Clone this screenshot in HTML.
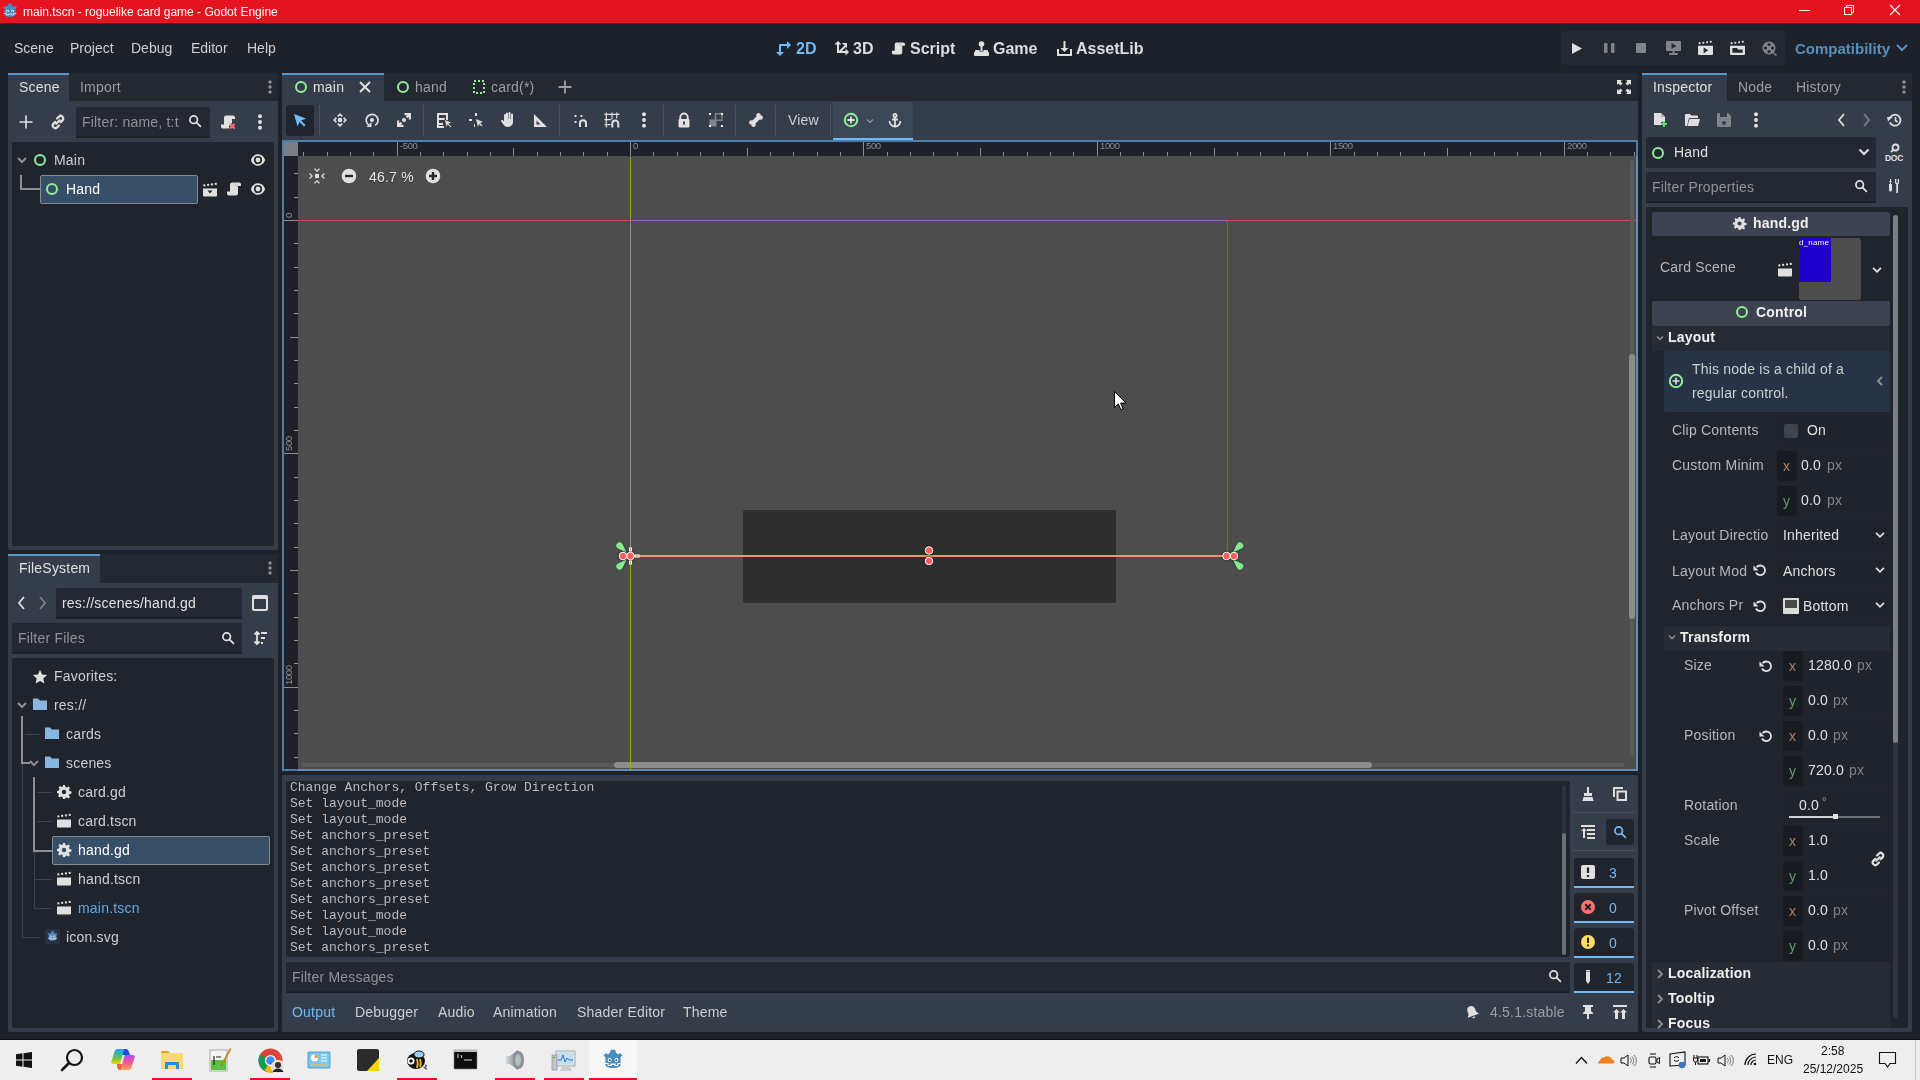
<!DOCTYPE html>
<html><head><meta charset="utf-8">
<style>
*{margin:0;padding:0;box-sizing:border-box}
html,body{width:1920px;height:1080px;overflow:hidden;background:#1d2129;font-family:"Liberation Sans",sans-serif;font-size:14px;color:#cdcfd2}
.a{position:absolute}
.t{position:absolute;white-space:nowrap;line-height:1;letter-spacing:.2px;will-change:transform}
svg{position:absolute;overflow:visible}
</style></head><body>

<svg width="0" height="0" style="position:absolute">
<defs>
<symbol id="i-plus" viewBox="0 0 16 16"><path d="M8 1.5v13M1.5 8h13" stroke="#e0e0e0" stroke-width="1.6" fill="none"/></symbol>
<symbol id="i-link" viewBox="0 0 16 16"><g fill="none" stroke="#e0e0e0" stroke-width="2.2" stroke-linecap="round"><path d="M7 4.5l1.8-1.8a2.6 2.6 0 0 1 3.7 3.7L10.7 8.2"/><path d="M9 11.5l-1.8 1.8a2.6 2.6 0 0 1-3.7-3.7L5.3 7.8"/><path d="M6.2 9.8l3.6-3.6"/></g></symbol>
<symbol id="i-search" viewBox="0 0 16 16"><g fill="none" stroke="#e0e0e0" stroke-width="2"><circle cx="6.5" cy="6.5" r="4.3"/><path d="M9.6 9.6l4.6 4.6" stroke-linecap="round"/></g></symbol>
<symbol id="i-kebab" viewBox="0 0 16 16"><g fill="#e0e0e0"><circle cx="8" cy="2.2" r="2"/><circle cx="8" cy="8" r="2"/><circle cx="8" cy="13.8" r="2"/></g></symbol>
<symbol id="i-kebabg" viewBox="0 0 16 16"><g fill="#8d9096"><circle cx="8" cy="3" r="1.7"/><circle cx="8" cy="8" r="1.7"/><circle cx="8" cy="13" r="1.7"/></g></symbol>
<symbol id="i-eye" viewBox="0 0 16 16"><path d="M8 2.3C4.3 2.3 1.5 5.3 1 8c.5 2.7 3.3 5.7 7 5.7s6.5-3 7-5.7c-.5-2.7-3.3-5.7-7-5.7zm0 1.6a4.1 4.1 0 1 1 0 8.2 4.1 4.1 0 0 1 0-8.2z" fill="#e0e0e0" fill-rule="evenodd"/><path d="M8 5.4a2.6 2.6 0 1 1 0 5.2 2.6 2.6 0 0 1 0-5.2z" fill="none" stroke="#20242c" stroke-width="0"/><circle cx="8" cy="8" r="2.4" fill="#e0e0e0"/></symbol>
<symbol id="i-node" viewBox="0 0 16 16"><circle cx="8" cy="8" r="5" fill="none" stroke="#8eef97" stroke-width="2"/></symbol>
<symbol id="i-clap" viewBox="0 0 16 16"><g fill="#e0e0e0"><path d="M1 6.5h14v7a1 1 0 0 1-1 1H2a1 1 0 0 1-1-1z"/><path d="M1.2 2.6l2 -.3.3 2-2 .3zM5 2.1l2-.3.3 2-2 .3zM8.8 1.6l2-.3.3 2-2 .3zM12.6 1.1l2-.3.3 2-2 .3z"/></g></symbol>
<symbol id="i-clapd" viewBox="0 0 16 16"><g fill="#e0e0e0"><path d="M1 6.5h14v7a1 1 0 0 1-1 1H2a1 1 0 0 1-1-1z"/><path d="M1.2 2.6l2 -.3.3 2-2 .3zM5 2.1l2-.3.3 2-2 .3zM8.8 1.6l2-.3.3 2-2 .3zM12.6 1.1l2-.3.3 2-2 .3z"/></g><path d="M5.5 8.5h5L8 11.5z" fill="#20242c"/></symbol>
<symbol id="i-script" viewBox="0 0 16 16"><path d="M6 1.5h7a2 2 0 0 1 2 2v1.5h-3V12a2.5 2.5 0 0 1-2.5 2.5H3A2 2 0 0 1 1 12.5V10.5h3V3.5a2 2 0 0 1 2-2z" fill="#e0e0e0"/><path d="M9.5 1.8v3.2H12" fill="none" stroke="#b8b8b8" stroke-width=".8"/></symbol>
<symbol id="i-scriptx" viewBox="0 0 16 16"><path d="M6 1.5h7a2 2 0 0 1 2 2v1.5h-3V9l-3 3v2.5H3A2 2 0 0 1 1 12.5V10.5h3V3.5a2 2 0 0 1 2-2z" fill="#e0e0e0"/><path d="M10 10l4.5 4.5M14.5 10L10 14.5" stroke="#ff6e6e" stroke-width="2"/></symbol>
<symbol id="i-chev" viewBox="0 0 16 16"><path d="M4 6l4 4 4-4" fill="none" stroke="#8d9096" stroke-width="2"/></symbol>
<symbol id="i-chevw" viewBox="0 0 16 16"><path d="M3.5 5.5l4.5 4.5 4.5-4.5" fill="none" stroke="#e0e0e0" stroke-width="2"/></symbol>
<symbol id="i-folder" viewBox="0 0 16 16"><path d="M1 2.5h5l2 2h7v9.5H1z" fill="#88b6dd"/></symbol>
<symbol id="i-gear" viewBox="0 0 16 16"><path fill="#e0e0e0" fill-rule="evenodd" d="M7 1h2l.4 2a5 5 0 0 1 1.5.6l1.7-1.1 1.4 1.4-1.1 1.7a5 5 0 0 1 .6 1.5l2 .4v2l-2 .4a5 5 0 0 1-.6 1.5l1.1 1.7-1.4 1.4-1.7-1.1a5 5 0 0 1-1.5.6L9 15H7l-.4-2a5 5 0 0 1-1.5-.6l-1.7 1.1-1.4-1.4 1.1-1.7A5 5 0 0 1 2.5 9.4L1 9V7l2-.4a5 5 0 0 1 .6-1.5L2.5 3.4l1.4-1.4 1.7 1.1A5 5 0 0 1 7 2.5zM8 5.8A2.2 2.2 0 1 0 8 10.2 2.2 2.2 0 0 0 8 5.8z"/></symbol>
<symbol id="i-star" viewBox="0 0 16 16"><path d="M8 1l2.1 4.6 5 .5-3.8 3.4 1.1 4.9L8 11.9l-4.4 2.5 1.1-4.9L.9 6.1l5-.5z" fill="#e0e0e0"/></symbol>
<symbol id="i-godot" viewBox="0 0 16 16"><rect x="0" y="0" width="16" height="16" rx="2" fill="#2a3142"/><g transform="translate(2 2) scale(.75)"><path d="M2.5 6L1 4.5 3 3l1.5 1L6 2.2 6.5.5h3L10 2.2 11.5 4 13 3l2 1.5L13.5 6v6c-2 2.5-9 2.5-11 0z" fill="#478cbf"/><circle cx="5.5" cy="8" r="1.5" fill="#fff"/><circle cx="10.5" cy="8" r="1.5" fill="#fff"/><circle cx="5.6" cy="8.1" r=".7" fill="#414042"/><circle cx="10.4" cy="8.1" r=".7" fill="#414042"/><path d="M1.5 10.5h3v1.5h2v-1h3v1h2v-1.5h3" fill="none" stroke="#fff" stroke-width=".9"/></g></symbol>
<symbol id="i-larr" viewBox="0 0 16 16"><path d="M10 2L5 8l5 6" fill="none" stroke="#e0e0e0" stroke-width="1.8"/></symbol>
<symbol id="i-rarr" viewBox="0 0 16 16"><path d="M6 2l5 6-5 6" fill="none" stroke="#7d8087" stroke-width="1.8"/></symbol>
</defs></svg>

<!-- TITLE BAR -->
<div class="a" style="left:0;top:0;width:1920px;height:23px;background:#e5131f"></div>
<div class="t" style="left:23px;top:6px;font-size:12px;color:#fff;letter-spacing:0">main.tscn - roguelike card game - Godot Engine</div>


<svg style="left:2px;top:3px" width="16" height="16" viewBox="0 0 16 16"><path d="M2.5 6L1 4.5 3 3l1.5 1L6 2.2 6.5.5h3L10 2.2 11.5 4 13 3l2 1.5L13.5 6v6c-2 2.5-9 2.5-11 0z" fill="#478cbf"/><circle cx="5.5" cy="8" r="1.3" fill="#fff"/><circle cx="10.5" cy="8" r="1.3" fill="#fff"/><circle cx="5.6" cy="8.1" r=".6" fill="#333"/><circle cx="10.4" cy="8.1" r=".6" fill="#333"/><path d="M1.5 10.5h3v1.5h2v-1h3v1h2v-1.5h3" fill="none" stroke="#fff" stroke-width=".7"/></svg>
<svg style="left:1799px;top:10px" width="11" height="1"><rect width="11" height="1" fill="#fff"/></svg>
<svg style="left:1843px;top:4px" width="12" height="12" viewBox="0 0 12 12"><g fill="none" stroke="#fff" stroke-width="1"><rect x="1.5" y="3.5" width="7" height="7"/><path d="M3.5 3.5v-2h7v7h-2"/></g></svg>
<svg style="left:1889px;top:4px" width="12" height="12" viewBox="0 0 12 12"><path d="M1 1l10 10M11 1L1 11" stroke="#fff" stroke-width="1.1"/></svg>

<!-- MAIN SCREENS -->
<svg style="left:776px;top:41px" width="16" height="15" viewBox="0 0 16 15"><g fill="#70bafa"><path d="M3 4h2v8H3z"/><path d="M3 3h8v2H3z"/><path d="M11 0l4 4-4 4z"/><path d="M0 11h8l-4 4z"/></g></svg>
<div class="t" style="left:796px;top:41px;font-size:16px;font-weight:bold;letter-spacing:0;color:#70bafa">2D</div>
<svg style="left:834px;top:41px" width="15" height="15" viewBox="0 0 15 15"><g fill="#e0e0e0"><path d="M3 2h2v10H3z"/><path d="M3 10h10v2H3z"/><path d="M4 0l3.5 3.5h-7z"/><path d="M15 11l-3.5 3.5v-7z"/><path d="M4.5 10.5L11 4l1.4 1.4L5.9 11.9z"/><path d="M13 2v5l-5-5z"/></g></svg>
<div class="t" style="left:853px;top:41px;font-size:16px;font-weight:bold;letter-spacing:0;color:#dcdde0">3D</div>
<svg style="left:891px;top:41px" width="15" height="15"><use href="#i-script"/></svg>
<div class="t" style="left:910px;top:41px;font-size:16px;font-weight:bold;letter-spacing:0;color:#dcdde0">Script</div>
<svg style="left:974px;top:41px" width="15" height="15" viewBox="0 0 15 15"><g fill="#e0e0e0"><circle cx="7.5" cy="3" r="2.8"/><rect x="6.5" y="4" width="2" height="6"/><path d="M2 9h3.5v1.5h4V9H13a1 1 0 0 1 1 1v1H1v-1a1 1 0 0 1 1-1z"/><rect x="0" y="11" width="15" height="4" rx="1"/></g></svg>
<div class="t" style="left:993px;top:41px;font-size:16px;font-weight:bold;letter-spacing:0;color:#dcdde0">Game</div>
<svg style="left:1057px;top:41px" width="15" height="15" viewBox="0 0 15 15"><g fill="#e0e0e0"><path d="M6.5 0h2v7h3l-4 4-4-4h3z"/><path d="M0 8h2v5h11V8h2v7H0z"/></g></svg>
<div class="t" style="left:1076px;top:41px;font-size:16px;font-weight:bold;letter-spacing:0;color:#dcdde0">AssetLib</div>

<!-- RUN BAR -->
<div class="a" style="left:1561px;top:31px;width:224px;height:34px;background:#232831;border-radius:4px"></div>
<svg style="left:1571px;top:43px" width="11" height="11" viewBox="0 0 11 11"><path d="M1 0l10 5.5L1 11z" fill="#e0e0e0"/></svg>
<svg style="left:1604px;top:43px" width="11" height="10" viewBox="0 0 11 10"><g fill="#80848b"><rect x="0" y="0" width="3.5" height="10" rx=".8"/><rect x="7" y="0" width="3.5" height="10" rx=".8"/></g></svg>
<div class="a" style="left:1636px;top:43px;width:10px;height:10px;background:#80848b;border-radius:1px"></div>
<svg style="left:1666px;top:41px" width="15" height="14" viewBox="0 0 15 14"><g fill="#80848b"><path d="M1 0h13a1 1 0 0 1 1 1v8a1 1 0 0 1-1 1H1a1 1 0 0 1-1-1V1a1 1 0 0 1 1-1z"/><rect x="6.5" y="10" width="2" height="2"/><rect x="3" y="12" width="9" height="2" rx="1"/></g><path d="M5.5 2l5 3-5 3z" fill="#232831"/></svg>
<svg style="left:1698px;top:41px" width="15" height="14" viewBox="0 0 16 15"><g fill="#e0e0e0"><path d="M0 5h16v9a1 1 0 0 1-1 1H1a1 1 0 0 1-1-1z"/><path d="M0.5 1.5l2-.3.3 2-2 .3zM4.5 1l2-.3.3 2-2 .3zM8.5.5l2-.3.3 2-2 .3zM12.5 0l2-.3.3 2-2 .3z"/></g><path d="M6 7l5 3-5 3z" fill="#232831"/></svg>
<svg style="left:1730px;top:41px" width="15" height="14" viewBox="0 0 16 15"><g fill="#e0e0e0"><path d="M0 5h16v9a1 1 0 0 1-1 1H1a1 1 0 0 1-1-1z"/><path d="M0.5 1.5l2-.3.3 2-2 .3zM4.5 1l2-.3.3 2-2 .3zM8.5.5l2-.3.3 2-2 .3zM12.5 0l2-.3.3 2-2 .3z"/></g><path d="M2.5 7.5h5l1 1.5h5v3.5h-11z" fill="#232831"/></svg>
<svg style="left:1762px;top:41px" width="15" height="15" viewBox="0 0 15 15"><circle cx="7" cy="7" r="6.5" fill="#80848b"/><g fill="#232831"><circle cx="7" cy="3.5" r="1.6"/><circle cx="7" cy="10.5" r="1.6"/><circle cx="3.5" cy="7" r="1.6"/><circle cx="10.5" cy="7" r="1.6"/></g><path d="M11 11.5l3.5 3" stroke="#80848b" stroke-width="1.5"/></svg>
<div class="t" style="left:1795px;top:41px;font-size:15px;font-weight:bold;letter-spacing:0;color:#5690bd">Compatibility</div>
<svg style="left:1896px;top:43px" width="12" height="10" viewBox="0 0 12 10"><path d="M1 2l5 5 5-5" fill="none" stroke="#5690bd" stroke-width="2"/></svg>

<!-- MENU -->
<div class="t" style="left:14px;top:41px;letter-spacing:0">Scene</div>
<div class="t" style="left:70px;top:41px;letter-spacing:0">Project</div>
<div class="t" style="left:131px;top:41px;letter-spacing:0">Debug</div>
<div class="t" style="left:191px;top:41px;letter-spacing:0">Editor</div>
<div class="t" style="left:247px;top:41px;letter-spacing:0">Help</div>

<!-- LEFT TOP DOCK -->
<div class="a" style="left:8px;top:73px;width:270px;height:477px;background:#363d4a;border-radius:2px"></div>
<div class="a" style="left:8px;top:73px;width:270px;height:28px;background:#232831;border-radius:2px 2px 0 0"></div>
<div class="a" style="left:8px;top:73px;width:61px;height:28px;background:#363d4a;border-top:2px solid #5896cd"></div>
<div class="a" style="left:12px;top:142px;width:262px;height:404px;background:#20242c;border-radius:2px"></div>

<!-- LEFT BOTTOM DOCK -->
<div class="a" style="left:8px;top:554px;width:270px;height:478px;background:#363d4a;border-radius:2px"></div>
<div class="a" style="left:8px;top:554px;width:270px;height:29px;background:#232831;border-radius:2px 2px 0 0"></div>
<div class="a" style="left:8px;top:554px;width:92px;height:29px;background:#363d4a;border-top:2px solid #5896cd"></div>
<div class="a" style="left:12px;top:658px;width:262px;height:370px;background:#20242c;border-radius:2px"></div>


<!-- SCENE DOCK CONTENT -->
<div class="t" style="left:19px;top:80px;color:#e0e0e0">Scene</div>
<div class="t" style="left:80px;top:80px;color:#9b9ea3">Import</div>
<svg style="left:262px;top:79px" width="16" height="16"><use href="#i-kebabg"/></svg>
<svg style="left:18px;top:114px" width="16" height="16"><use href="#i-plus"/></svg>
<svg style="left:50px;top:114px" width="16" height="16"><use href="#i-link"/></svg>
<div class="a" style="left:76px;top:107px;width:134px;height:31px;background:#232832;border-bottom:2px solid #1c2028;border-radius:2px 2px 0 0"></div>
<div class="t" style="left:82px;top:115px;color:#8f9297">Filter: name, t:t</div>
<svg style="left:188px;top:114px" width="14" height="14"><use href="#i-search"/></svg>
<svg style="left:220px;top:114px" width="16" height="16"><use href="#i-scriptx"/></svg>
<svg style="left:252px;top:114px" width="16" height="16"><use href="#i-kebab"/></svg>
<svg style="left:14px;top:152px" width="16" height="16"><use href="#i-chev"/></svg>
<svg style="left:32px;top:152px" width="16" height="16"><use href="#i-node"/></svg>
<div class="t" style="left:54px;top:153px;color:#cdcfd2">Main</div>
<svg style="left:250px;top:152px" width="16" height="16"><use href="#i-eye"/></svg>
<div class="a" style="left:20px;top:175px;width:2px;height:15px;background:#8c8f95"></div>
<div class="a" style="left:20px;top:188px;width:20px;height:2px;background:#8c8f95"></div>
<div class="a" style="left:40px;top:175px;width:158px;height:29px;background:#374e67;border:1px solid #868a91;border-radius:2px"></div>
<svg style="left:44px;top:181px" width="16" height="16"><use href="#i-node"/></svg>
<div class="t" style="left:66px;top:182px;color:#ffffff">Hand</div>
<svg style="left:202px;top:182px" width="16" height="16"><use href="#i-clapd"/></svg>
<svg style="left:226px;top:181px" width="16" height="16"><use href="#i-script"/></svg>
<svg style="left:250px;top:181px" width="16" height="16"><use href="#i-eye"/></svg>

<!-- FILESYSTEM DOCK CONTENT -->
<div class="t" style="left:19px;top:561px;color:#e0e0e0">FileSystem</div>
<svg style="left:262px;top:560px" width="16" height="16"><use href="#i-kebabg"/></svg>
<svg style="left:14px;top:595px" width="16" height="16"><use href="#i-larr"/></svg>
<svg style="left:34px;top:595px" width="16" height="16"><use href="#i-rarr"/></svg>
<div class="a" style="left:56px;top:588px;width:186px;height:31px;background:#232832;border-bottom:2px solid #1c2028;border-radius:2px 2px 0 0"></div>
<div class="t" style="left:62px;top:596px;color:#e0e0e0">res://scenes/hand.gd</div>
<div class="a" style="left:252px;top:595px;width:16px;height:16px;border:2px solid #e0e0e0;border-top-width:4px;border-radius:2px"></div>
<div class="a" style="left:12px;top:623px;width:230px;height:31px;background:#232832;border-bottom:2px solid #1c2028;border-radius:2px 2px 0 0"></div>
<div class="t" style="left:18px;top:631px;color:#8f9297">Filter Files</div>
<svg style="left:221px;top:631px" width="14" height="14"><use href="#i-search"/></svg>
<svg style="left:252px;top:630px" width="16" height="16" viewBox="0 0 16 16"><g fill="none" stroke="#e0e0e0" stroke-width="1.8"><path d="M5 2v12M2.5 4.5L5 2l2.5 2.5M2.5 11.5L5 14l2.5-2.5"/><path d="M9 3h6M9 8h4M9 13h2"/></g></svg>

<svg style="left:32px;top:669px" width="16" height="16"><use href="#i-star"/></svg>
<div class="t" style="left:54px;top:669px;color:#cdcfd2">Favorites:</div>
<svg style="left:14px;top:697px" width="16" height="16"><use href="#i-chev"/></svg>
<svg style="left:32px;top:696px" width="16" height="16"><use href="#i-folder"/></svg>
<div class="t" style="left:54px;top:698px;color:#cdcfd2">res://</div>
<svg style="left:44px;top:725px" width="16" height="16"><use href="#i-folder"/></svg>
<div class="t" style="left:66px;top:727px;color:#cdcfd2">cards</div>
<svg style="left:26px;top:755px" width="16" height="16"><use href="#i-chev"/></svg>
<svg style="left:44px;top:754px" width="16" height="16"><use href="#i-folder"/></svg>
<div class="t" style="left:66px;top:756px;color:#cdcfd2">scenes</div>
<svg style="left:56px;top:784px" width="16" height="16"><use href="#i-gear"/></svg>
<div class="t" style="left:78px;top:785px;color:#cdcfd2">card.gd</div>
<svg style="left:56px;top:813px" width="16" height="16"><use href="#i-clap"/></svg>
<div class="t" style="left:78px;top:814px;color:#cdcfd2">card.tscn</div>
<div class="a" style="left:52px;top:836px;width:218px;height:29px;background:#374e67;border:1px solid #868a91;border-radius:2px"></div>
<svg style="left:56px;top:842px" width="16" height="16"><use href="#i-gear"/></svg>
<div class="t" style="left:78px;top:843px;color:#ffffff">hand.gd</div>
<svg style="left:56px;top:871px" width="16" height="16"><use href="#i-clap"/></svg>
<div class="t" style="left:78px;top:872px;color:#cdcfd2">hand.tscn</div>
<svg style="left:56px;top:900px" width="16" height="16"><use href="#i-clap"/></svg>
<div class="t" style="left:78px;top:901px;color:#5fa9ec">main.tscn</div>
<svg style="left:45px;top:929px" width="15" height="15"><use href="#i-godot"/></svg>
<div class="t" style="left:66px;top:930px;color:#cdcfd2">icon.svg</div>
<!-- tree lines -->
<div class="a" style="left:21px;top:716px;width:2px;height:48px;background:#8c8f95"></div>
<div class="a" style="left:21px;top:762px;width:9px;height:2px;background:#8c8f95"></div>
<div class="a" style="left:25px;top:734px;width:15px;height:1px;background:#3c414b"></div>
<div class="a" style="left:22px;top:764px;width:1px;height:174px;background:#3c414b"></div>
<div class="a" style="left:22px;top:937px;width:18px;height:1px;background:#3c414b"></div>
<div class="a" style="left:33px;top:777px;width:2px;height:75px;background:#8c8f95"></div>
<div class="a" style="left:33px;top:850px;width:19px;height:2px;background:#8c8f95"></div>
<div class="a" style="left:37px;top:792px;width:15px;height:1px;background:#3c414b"></div>
<div class="a" style="left:37px;top:821px;width:15px;height:1px;background:#3c414b"></div>
<div class="a" style="left:34px;top:852px;width:1px;height:57px;background:#3c414b"></div>
<div class="a" style="left:34px;top:879px;width:18px;height:1px;background:#3c414b"></div>
<div class="a" style="left:34px;top:908px;width:18px;height:1px;background:#3c414b"></div>

<!-- CENTER -->
<div class="a" style="left:282px;top:73px;width:1356px;height:28px;background:#232831;border-radius:3px 3px 0 0"></div>
<div class="a" style="left:282px;top:73px;width:102px;height:28px;background:#363d4a;border-top:2px solid #5896cd"></div>
<div class="a" style="left:282px;top:101px;width:1356px;height:39px;background:#363d4a"></div>
<div class="a" style="left:282px;top:140px;width:1356px;height:631px;background:#1e2129"></div><div class="a" style="left:298px;top:156px;width:1340px;height:615px;background:#4d4d4d"></div>


<!-- SCENE TABS -->
<svg style="left:293px;top:79px" width="16" height="16"><use href="#i-node"/></svg>
<div class="t" style="left:313px;top:80px;color:#e0e0e0">main</div>
<svg style="left:358px;top:80px" width="14" height="14" viewBox="0 0 14 14"><path d="M2 2l10 10M12 2L2 12" stroke="#e0e0e0" stroke-width="2"/></svg>
<svg style="left:395px;top:79px" width="16" height="16"><use href="#i-node"/></svg>
<div class="t" style="left:415px;top:80px;color:#9b9ea3">hand</div>
<svg style="left:473px;top:80px" width="12" height="14" viewBox="0 0 12 14"><rect x="1" y="1" width="10" height="12" fill="none" stroke="#8eef97" stroke-width="2" stroke-dasharray="2 2"/></svg>
<div class="t" style="left:491px;top:80px;color:#9b9ea3">card(*)</div>
<svg style="left:557px;top:79px" width="16" height="16"><path d="M8 1.5v13M1.5 8h13" stroke="#9b9ea3" stroke-width="1.8" fill="none"/></svg>
<svg style="left:1616px;top:79px" width="16" height="16" viewBox="0 0 16 16"><g fill="#e0e0e0"><path d="M1 1h5L4.5 2.5 6.5 4.5 4.5 6.5 2.5 4.5 1 6z"/><path d="M15 1h-5l1.5 1.5-2 2 2 2 2-2L15 6z"/><path d="M1 15h5l-1.5-1.5 2-2-2-2-2 2L1 10z"/><path d="M15 15h-5l1.5-1.5-2-2 2-2 2 2L15 10z"/></g></svg>

<!-- TOOLBAR -->
<div class="a" style="left:286px;top:105px;width:28px;height:31px;background:#20242c;border-radius:3px"></div>
<svg style="left:293px;top:113px" width="14" height="14" viewBox="0 0 14 14"><path d="M1 1l12 4.5-5 2 4.5 4.5-1.5 1.5L6.5 9 4.5 13.5z" fill="#70bafa"/></svg>
<div class="a" style="left:319px;top:105px;width:1px;height:31px;background:#4b515d"></div>
<svg style="left:333px;top:113px" width="14" height="14" viewBox="0 0 14 14"><g fill="#e0e0e0"><path d="M7 0l3 3-1.3.9L7 2.4 5.3 3.9 4 3z"/><path d="M7 14l3-3-1.3-.9L7 11.6l-1.7-1.5L4 11z"/><path d="M0 7l3-3 .9 1.3L2.4 7l1.5 1.7L3 10z"/><path d="M14 7l-3-3-.9 1.3L11.6 7l-1.5 1.7L11 10z"/><circle cx="7" cy="7" r="2.3"/></g></svg>
<svg style="left:365px;top:113px" width="14" height="14" viewBox="0 0 14 14"><path d="M10.2 12.3A5.9 5.9 0 1 0 3.6 12" fill="none" stroke="#e0e0e0" stroke-width="1.7"/><path d="M1.5 14H6.5V9z" fill="#e0e0e0"/><circle cx="7" cy="7" r="2.1" fill="#e0e0e0"/></svg>
<svg style="left:397px;top:113px" width="14" height="14" viewBox="0 0 14 14"><g fill="none" stroke="#e0e0e0" stroke-width="2.2"><path d="M7.5 1.1H12.9V6.5M12.6 1.4L9.6 4.4"/><path d="M6.5 12.9H1.1V7.5M1.4 12.6L4.4 9.6"/></g><circle cx="7" cy="7" r="2.1" fill="#e0e0e0"/></svg>
<div class="a" style="left:423px;top:105px;width:1px;height:31px;background:#4b515d"></div>
<svg style="left:437px;top:113px" width="16" height="15" viewBox="0 0 16 15"><path d="M0 0h11v7H9V2H2v3h6v2H2v3h4v2H2v1h5v2H0z" fill="#e0e0e0"/><path d="M7.5 6.5l7.5 3-3.2 1.2 2.7 2.7-1.1 1.1-2.7-2.7L9.5 15z" fill="#e0e0e0" stroke="#363d4a" stroke-width=".7"/></svg>
<svg style="left:469px;top:112px" width="16" height="16" viewBox="0 0 16 16"><g fill="#e0e0e0"><path d="M6 1h2v3H6zM0 7h3v2H0z"/><path d="M7 7l7 3-3 1 2.5 2.5-1 1L10 12l-1 3z"/><path d="M5 12h1v3H5z"/></g></svg>
<svg style="left:501px;top:112px" width="14" height="15" viewBox="0 0 14 15"><path d="M5 1.5a1 1 0 0 1 2 0V7h.5V1a1 1 0 0 1 2 0v6h.5V2.5a1 1 0 0 1 2 0V10a5 5 0 0 1-5 5H6.5A4.5 4.5 0 0 1 3 13.2L.3 9.5a1 1 0 0 1 1.6-1.2L3 9.5V3a1 1 0 0 1 2 0z" fill="#e0e0e0"/></svg>
<svg style="left:533px;top:113px" width="14" height="14" viewBox="0 0 14 14"><path d="M1 1v13h13zM3.5 7.5v4h4z" fill="#e0e0e0" fill-rule="evenodd"/></svg>
<div class="a" style="left:559px;top:105px;width:1px;height:31px;background:#4b515d"></div>
<svg style="left:574px;top:113px" width="14" height="14" viewBox="0 0 14 14"><g fill="#e0e0e0"><rect x=".5" y="2" width="2" height="2"/><rect x="6.5" y="2" width="2" height="2"/><rect x=".5" y="8" width="2" height="2"/></g><path d="M6 14V10.3a3 3 0 0 1 6 0V14" fill="none" stroke="#e0e0e0" stroke-width="2"/></svg>
<svg style="left:604px;top:112px" width="16" height="16" viewBox="0 0 16 16"><g stroke="#e0e0e0" stroke-width="1.2" fill="none"><path d="M2.3 .5v15M8 .5v7M12.7 .5v6M.5 2.3h15M.5 7.7h6.5M.5 12.7h6"/></g><path d="M8.3 15.5V11.5a3 3 0 0 1 6 0v4" fill="none" stroke="#e0e0e0" stroke-width="2"/></svg>
<svg style="left:636px;top:112px" width="16" height="16"><use href="#i-kebab"/></svg>
<div class="a" style="left:663px;top:105px;width:1px;height:31px;background:#4b515d"></div>
<svg style="left:677px;top:112px" width="14" height="16" viewBox="0 0 14 16"><path d="M3.3 7V5.2a3.7 3.7 0 0 1 7.4 0V7" fill="none" stroke="#e0e0e0" stroke-width="1.9"/><rect x="1.5" y="7" width="11" height="8.5" rx="1" fill="#e0e0e0"/><rect x="6" y="9.5" width="2" height="3" fill="#363d4a"/></svg>
<svg style="left:709px;top:113px" width="14" height="14" viewBox="0 0 14 14"><rect x="6.5" y=".8" width="6.5" height="6.5" fill="none" stroke="#80848b" stroke-width="1.5"/><rect x=".5" y="6.5" width="7" height="7" fill="#80848b"/><g fill="#f0f0f0"><rect x="0" y="0" width="2" height="2"/><rect x="12" y="0" width="2" height="2"/><rect x="0" y="12" width="2" height="2"/><rect x="12" y="12" width="2" height="2"/></g></svg>
<div class="a" style="left:735px;top:105px;width:1px;height:31px;background:#4b515d"></div>
<svg style="left:749px;top:113px" width="14" height="14" viewBox="0 0 14 14"><g fill="#e0e0e0"><circle cx="9.5" cy="2.3" r="2.2"/><circle cx="11.7" cy="4.5" r="2.2"/><circle cx="2.3" cy="9.5" r="2.2"/><circle cx="4.5" cy="11.7" r="2.2"/><path d="M9 3l2 2-6 6-2-2z" stroke="#e0e0e0" stroke-width="1.5"/></g></svg>
<div class="a" style="left:775px;top:105px;width:1px;height:31px;background:#4b515d"></div>
<div class="t" style="left:788px;top:113px;color:#cdcfd2">View</div>
<div class="a" style="left:830px;top:105px;width:1px;height:31px;background:#4b515d"></div>
<div class="a" style="left:833px;top:102px;width:80px;height:38px;background:#3b4657;border-bottom:2px solid #70bafa"></div>
<svg style="left:843px;top:112px" width="16" height="16" viewBox="0 0 16 16"><circle cx="8" cy="8" r="6.2" fill="none" stroke="#8eef97" stroke-width="2"/><path d="M8 4.5v7M4.5 8h7" stroke="#e0e0e0" stroke-width="1.8"/></svg>
<svg style="left:864px;top:115px" width="12" height="12" viewBox="0 0 16 16"><path d="M4 6l4 4 4-4" fill="none" stroke="#8d9096" stroke-width="2"/></svg>
<svg style="left:888px;top:113px" width="14" height="14" viewBox="0 0 14 14"><g fill="none" stroke="#e0e0e0" stroke-width="1.8"><circle cx="7" cy="2.5" r="1.6"/><path d="M7 4v9M4 6.5h6M1.5 8a5.5 5.5 0 0 0 11 0"/></g></svg>

<div class="a" style="left:284px;top:142px;width:1352px;height:14px;background:#1e2129"></div>
<div class="a" style="left:284px;top:142px;width:14px;height:629px;background:#1e2129"></div>
<div class="a" style="left:284px;top:142px;width:14px;height:14px;background:#7b7e83"></div>
<svg style="left:0;top:0" width="1920" height="1080"><path d="M303.5 152V156 M327.5 152V156 M350.5 152V156 M373.5 152V156 M397.5 142V156 M420.5 152V156 M443.5 152V156 M467.5 152V156 M490.5 152V156 M513.5 148V156 M537.5 152V156 M560.5 152V156 M583.5 152V156 M607.5 152V156 M630.5 142V156 M653.5 152V156 M677.5 152V156 M700.5 152V156 M723.5 152V156 M747.5 148V156 M770.5 152V156 M793.5 152V156 M817.5 152V156 M840.5 152V156 M863.5 142V156 M887.5 152V156 M910.5 152V156 M933.5 152V156 M957.5 152V156 M980.5 148V156 M1003.5 152V156 M1027.5 152V156 M1050.5 152V156 M1073.5 152V156 M1097.5 142V156 M1120.5 152V156 M1143.5 152V156 M1167.5 152V156 M1190.5 152V156 M1214.5 148V156 M1237.5 152V156 M1260.5 152V156 M1284.5 152V156 M1307.5 152V156 M1330.5 142V156 M1354.5 152V156 M1377.5 152V156 M1400.5 152V156 M1424.5 152V156 M1447.5 148V156 M1470.5 152V156 M1494.5 152V156 M1517.5 152V156 M1540.5 152V156 M1564.5 142V156 M1587.5 152V156 M1610.5 152V156 M1634.5 152V156 M294 173.5H298 M294 197.5H298 M284 220.5H298 M294 243.5H298 M294 267.5H298 M294 290.5H298 M294 313.5H298 M290 337.5H298 M294 360.5H298 M294 383.5H298 M294 407.5H298 M294 430.5H298 M284 453.5H298 M294 477.5H298 M294 500.5H298 M294 523.5H298 M294 547.5H298 M290 570.5H298 M294 593.5H298 M294 617.5H298 M294 640.5H298 M294 663.5H298 M284 687.5H298 M294 710.5H298 M294 733.5H298 M294 757.5H298" stroke="#8a8d93" stroke-width="1"/></svg>
<div class="t" style="left:400px;top:141px;font-size:9.5px;color:#8a8d93;letter-spacing:-0.4px">-500</div>
<div class="t" style="left:633px;top:141px;font-size:9.5px;color:#8a8d93;letter-spacing:-0.4px">0</div>
<div class="t" style="left:866px;top:141px;font-size:9.5px;color:#8a8d93;letter-spacing:-0.4px">500</div>
<div class="t" style="left:1100px;top:141px;font-size:9.5px;color:#8a8d93;letter-spacing:-0.4px">1000</div>
<div class="t" style="left:1333px;top:141px;font-size:9.5px;color:#8a8d93;letter-spacing:-0.4px">1500</div>
<div class="t" style="left:1567px;top:141px;font-size:9.5px;color:#8a8d93;letter-spacing:-0.4px">2000</div>
<div class="t" style="left:284px;top:218px;font-size:9.5px;color:#8a8d93;letter-spacing:-0.4px;transform-origin:0 0;transform:rotate(-90deg)">0</div>
<div class="t" style="left:284px;top:451px;font-size:9.5px;color:#8a8d93;letter-spacing:-0.4px;transform-origin:0 0;transform:rotate(-90deg)">500</div>
<div class="t" style="left:284px;top:685px;font-size:9.5px;color:#8a8d93;letter-spacing:-0.4px;transform-origin:0 0;transform:rotate(-90deg)">1000</div>
<!-- canvas lines -->
<div class="a" style="left:299px;top:220px;width:331px;height:1px;background:#d6404f"></div>
<div class="a" style="left:630px;top:220px;width:598px;height:1px;background:#a45ab8"></div>
<div class="a" style="left:1228px;top:220px;width:408px;height:1px;background:#d6404f"></div>
<div class="a" style="left:630px;top:157px;width:1px;height:63px;background:#7cb81a"></div><div class="a" style="left:630px;top:221px;width:1px;height:335px;background:#6c9a78"></div><div class="a" style="left:630px;top:557px;width:1px;height:214px;background:#7cb81a;z-index:2"></div>
<div class="a" style="left:1227px;top:221px;width:1px;height:335px;background:#5c5ea8"></div>
<div class="a" style="left:743px;top:510px;width:373px;height:93px;background:#2e2e2e;border-radius:2px"></div>
<div class="a" style="left:630px;top:555px;width:601px;height:2px;background:#f0946a"></div>
<svg style="left:0;top:0;z-index:3" width="1920" height="1080">
<path d="M627.5 553.5L617.0 548.4A3.8 3.8 0 1 1 622.4 543.0Z M627.5 558.5L622.4 569.0A3.8 3.8 0 1 1 617.0 563.6Z M1232.0 553.5L1237.1 543.0A3.8 3.8 0 1 1 1242.5 548.4Z M1232.0 558.5L1242.5 563.6A3.8 3.8 0 1 1 1237.1 569.0Z" fill="#88e890" stroke="rgba(0,0,0,.45)" stroke-width="1"/>
<g fill="#ff5c5c" stroke="#ffffff" stroke-width="1" style="filter:drop-shadow(0 0 1px rgba(0,0,0,.8))">
<circle cx="623" cy="556" r="3.8"/><circle cx="630.5" cy="556" r="3.8"/>
<circle cx="929" cy="550.5" r="3.8"/><circle cx="929" cy="561" r="3.8"/>
<circle cx="1226.5" cy="556" r="3.8"/><circle cx="1234" cy="556" r="3.8"/>
</g>
<g><rect x="629" y="547.5" width="3" height="4" fill="#fff"/><rect x="630" y="548.5" width="1" height="2" fill="#f05050"/><rect x="629" y="560.5" width="3" height="4" fill="#fff"/><rect x="630" y="561.5" width="1" height="2" fill="#f05050"/><rect x="634.5" y="554.5" width="5" height="3" fill="#fff"/><rect x="635.5" y="555.5" width="3" height="1" fill="#f05050"/></g>
<path d="M1114.5 391.5v16l3.8-3.6 2.6 5.8 2.2-1-2.5-5.6h5.5z" fill="#fff" stroke="#000" stroke-width="1"/>
</svg>
<!-- zoom widget -->
<svg style="left:309px;top:168px" width="16" height="16" viewBox="0 0 16 16"><g fill="#e0e0e0"><rect x="6" y="6" width="4" height="4"/><path d="M5 1l3 3 3-3-1-.8L8 2.2 6 .2zM5 15l3-3 3 3-1 .8L8 13.8 6 15.8zM1 5l3 3-3 3-.8-1L2.2 8 .2 6zM15 5l-3 3 3 3 .8-1L13.8 8l2-2z"/></g></svg>
<svg style="left:341px;top:168px" width="16" height="16" viewBox="0 0 16 16"><circle cx="8" cy="8" r="7.3" fill="#e0e0e0"/><path d="M4 8h8" stroke="#2a2a2a" stroke-width="2.4"/></svg>
<div class="t" style="left:369px;top:170px;font-size:14px;color:#e8e8e8;text-shadow:0 1px 1px rgba(0,0,0,.5)">46.7 %</div>
<svg style="left:425px;top:168px" width="16" height="16" viewBox="0 0 16 16"><circle cx="8" cy="8" r="7.3" fill="#e0e0e0"/><path d="M4 8h8M8 4v8" stroke="#2a2a2a" stroke-width="2.4"/></svg>
<!-- scrollbars -->
<div class="a" style="left:302px;top:763px;width:1322px;height:4px;background:#5a5a5a;border-radius:2px"></div>
<div class="a" style="left:614px;top:762px;width:758px;height:6px;background:#8c8c8c;border-radius:3px"></div>
<div class="a" style="left:1630px;top:160px;width:4px;height:596px;background:#5a5a5a;border-radius:2px"></div>
<div class="a" style="left:1629px;top:354px;width:6px;height:265px;background:#8c8c8c;border-radius:3px"></div>
<div class="a" style="left:282px;top:140px;width:1356px;height:631px;border:2px solid rgba(112,186,250,.6)"></div>

<!-- OUTPUT -->
<div class="a" style="left:282px;top:775px;width:1356px;height:257px;background:#363d4a;border-radius:2px"></div>

<!-- OUTPUT CONTENT -->
<div class="a" style="left:286px;top:781px;width:1284px;height:176px;background:#20242c;border-radius:2px"></div>
<div class="t" style="left:290px;top:781px;font-family:'Liberation Mono',monospace;font-size:13px;letter-spacing:0;color:#b8bbbf">Change Anchors, Offsets, Grow Direction</div>
<div class="t" style="left:290px;top:797px;font-family:'Liberation Mono',monospace;font-size:13px;letter-spacing:0;color:#b8bbbf">Set layout_mode</div>
<div class="t" style="left:290px;top:813px;font-family:'Liberation Mono',monospace;font-size:13px;letter-spacing:0;color:#b8bbbf">Set layout_mode</div>
<div class="t" style="left:290px;top:829px;font-family:'Liberation Mono',monospace;font-size:13px;letter-spacing:0;color:#b8bbbf">Set anchors_preset</div>
<div class="t" style="left:290px;top:845px;font-family:'Liberation Mono',monospace;font-size:13px;letter-spacing:0;color:#b8bbbf">Set anchors_preset</div>
<div class="t" style="left:290px;top:861px;font-family:'Liberation Mono',monospace;font-size:13px;letter-spacing:0;color:#b8bbbf">Set anchors_preset</div>
<div class="t" style="left:290px;top:877px;font-family:'Liberation Mono',monospace;font-size:13px;letter-spacing:0;color:#b8bbbf">Set anchors_preset</div>
<div class="t" style="left:290px;top:893px;font-family:'Liberation Mono',monospace;font-size:13px;letter-spacing:0;color:#b8bbbf">Set anchors_preset</div>
<div class="t" style="left:290px;top:909px;font-family:'Liberation Mono',monospace;font-size:13px;letter-spacing:0;color:#b8bbbf">Set layout_mode</div>
<div class="t" style="left:290px;top:925px;font-family:'Liberation Mono',monospace;font-size:13px;letter-spacing:0;color:#b8bbbf">Set layout_mode</div>
<div class="t" style="left:290px;top:941px;font-family:'Liberation Mono',monospace;font-size:13px;letter-spacing:0;color:#b8bbbf">Set anchors_preset</div>
<div class="a" style="left:1562px;top:785px;width:4px;height:170px;background:#2e333c;border-radius:2px"></div>
<div class="a" style="left:1562px;top:833px;width:4px;height:122px;background:#6b6f76;border-radius:2px"></div>
<div class="a" style="left:286px;top:962px;width:1284px;height:31px;background:#232832;border-bottom:2px solid #1c2028;border-radius:2px 2px 0 0"></div>
<div class="t" style="left:292px;top:970px;color:#8f9297">Filter Messages</div>
<svg style="left:1548px;top:969px" width="14" height="14"><use href="#i-search"/></svg>
<svg style="left:1581px;top:787px" width="14" height="14" viewBox="0 0 14 14"><path d="M6 0h2v6h3v3H3V6h3zM2.5 10h9l1 4h-11z" fill="#e0e0e0"/></svg>
<svg style="left:1613px;top:787px" width="14" height="14" viewBox="0 0 14 14"><g fill="none" stroke="#e0e0e0" stroke-width="2"><path d="M1 10V1h9"/><rect x="4.5" y="4.5" width="8.5" height="8.5"/></g></svg>
<div class="a" style="left:1573px;top:812px;width:62px;height:1px;background:#4b515d"></div>
<svg style="left:1581px;top:825px" width="14" height="14" viewBox="0 0 14 14"><g fill="#e0e0e0"><path d="M0 0h14v2H0zM6 4h8v2H6zM6 8h8v2H6zM6 12h8v2H6zM3 3l3 3H4v7H2V6H0z"/></g></svg>
<div class="a" style="left:1606px;top:819px;width:28px;height:26px;background:#20242c;border-radius:3px"></div>
<svg style="left:1613px;top:825px" width="14" height="14" viewBox="0 0 16 16"><g fill="none" stroke="#70bafa" stroke-width="2"><circle cx="6.5" cy="6.5" r="4.3"/><path d="M9.6 9.6l4.6 4.6" stroke-linecap="round"/></g></svg>
<div class="a" style="left:1573px;top:850px;width:62px;height:1px;background:#4b515d"></div>

<div class="a" style="left:1574px;top:858px;width:60px;height:30px;background:#20242c;border-bottom:2px solid #70bafa;border-radius:3px 3px 0 0"></div>
<div class="t" style="left:1609px;top:866px;color:#70bafa;font-size:14px">3</div>
<div class="a" style="left:1574px;top:893px;width:60px;height:30px;background:#20242c;border-bottom:2px solid #70bafa;border-radius:3px 3px 0 0"></div>
<div class="t" style="left:1609px;top:901px;color:#70bafa;font-size:14px">0</div>
<div class="a" style="left:1574px;top:928px;width:60px;height:30px;background:#20242c;border-bottom:2px solid #70bafa;border-radius:3px 3px 0 0"></div>
<div class="t" style="left:1609px;top:936px;color:#70bafa;font-size:14px">0</div>
<div class="a" style="left:1574px;top:963px;width:60px;height:30px;background:#20242c;border-bottom:2px solid #70bafa;border-radius:3px 3px 0 0"></div>
<div class="t" style="left:1606px;top:971px;color:#70bafa;font-size:14px">12</div>
<svg style="left:1581px;top:865px" width="14" height="14" viewBox="0 0 14 14"><rect x="0" y="0" width="14" height="14" rx="2" fill="#e0e0e0"/><path d="M7 2.5v5.5M7 10v2" stroke="#20242c" stroke-width="2.2"/></svg>
<svg style="left:1581px;top:900px" width="14" height="14" viewBox="0 0 14 14"><circle cx="7" cy="7" r="7" fill="#ff7070"/><path d="M4.3 4.3l5.4 5.4M9.7 4.3L4.3 9.7" stroke="#20242c" stroke-width="2"/></svg>
<svg style="left:1581px;top:935px" width="14" height="14" viewBox="0 0 14 14"><circle cx="7" cy="7" r="7" fill="#ffdd65"/><path d="M7 2.5v5.5M7 9.5v2" stroke="#20242c" stroke-width="2"/></svg>
<svg style="left:1583px;top:970px" width="10" height="14" viewBox="0 0 10 14"><path d="M3 2h4v9L5 14 3 11z" fill="#e0e0e0"/><rect x="3" y="0" width="4" height="1.5" fill="#e0e0e0"/></svg>

<div class="t" style="left:292px;top:1005px;color:#70bafa">Output</div>
<div class="t" style="left:355px;top:1005px;color:#cdcfd2">Debugger</div>
<div class="t" style="left:438px;top:1005px;color:#cdcfd2">Audio</div>
<div class="t" style="left:493px;top:1005px;color:#cdcfd2">Animation</div>
<div class="t" style="left:577px;top:1005px;color:#cdcfd2">Shader Editor</div>
<div class="t" style="left:683px;top:1005px;color:#cdcfd2">Theme</div>
<svg style="left:1465px;top:1005px" width="14" height="14" viewBox="0 0 14 14"><path d="M7 1a4 4 0 0 1 4 4v3l2 3H1l2-3V5a4 4 0 0 1 4-4zM5.5 12h3a1.5 1.5 0 0 1-3 0z" fill="#e0e0e0" transform="rotate(-20 7 7)"/></svg>
<div class="t" style="left:1490px;top:1005px;color:#9b9ea3">4.5.1.stable</div>
<svg style="left:1581px;top:1005px" width="14" height="14" viewBox="0 0 14 14"><path d="M2 0h10v2H10v4l2 2v1H8v5H6V9H2V8l2-2V2H2z" fill="#e0e0e0"/></svg>
<svg style="left:1613px;top:1005px" width="14" height="14" viewBox="0 0 14 14"><g fill="#e0e0e0"><rect x="0" y="0" width="14" height="2"/><path d="M3.5 4L7 7.5H5V14H2V7.5H0zM10.5 4L14 7.5h-2V14H9V7.5H7z"/></g></svg>

<!-- INSPECTOR -->
<div class="a" style="left:1642px;top:73px;width:270px;height:959px;background:#363d4a;border-radius:2px"></div>
<div class="a" style="left:1642px;top:73px;width:270px;height:28px;background:#232831;border-radius:3px 3px 0 0"></div>
<div class="a" style="left:1642px;top:73px;width:85px;height:28px;background:#363d4a;border-top:2px solid #5896cd"></div>
<div class="a" style="left:1646px;top:207px;width:262px;height:821px;background:#20242c;border-radius:2px"></div>


<!-- INSPECTOR CONTENT -->
<div class="t" style="left:1653px;top:80px;color:#e0e0e0">Inspector</div>
<div class="t" style="left:1738px;top:80px;color:#9b9ea3">Node</div>
<div class="t" style="left:1796px;top:80px;color:#9b9ea3">History</div>
<svg style="left:1896px;top:79px" width="16" height="16"><use href="#i-kebabg"/></svg>
<svg style="left:1653px;top:113px" width="14" height="15" viewBox="0 0 14 15"><path d="M1 0h7l4 4v5H8v3H1z" fill="#e0e0e0"/><path d="M8 0v4h4" fill="#b0b0b0"/><path d="M11 8v6M8 11h6" stroke="#5fe06a" stroke-width="2"/></svg>
<svg style="left:1685px;top:113px" width="15" height="14" viewBox="0 0 15 14"><path d="M0 2a1 1 0 0 1 1-1h4l1.5 1.5H12a1 1 0 0 1 1 1V5H4L2 13H1a1 1 0 0 1-1-1z" fill="#e0e0e0"/><path d="M4.5 6H15l-2 7H2.5z" fill="#e0e0e0"/></svg>
<svg style="left:1717px;top:113px" width="14" height="14" viewBox="0 0 14 14"><path d="M1 0h10l3 3v10a1 1 0 0 1-1 1H1a1 1 0 0 1-1-1V1a1 1 0 0 1 1-1zM3 0v4h7V0zM7 8a2 2 0 1 0 0 4 2 2 0 0 0 0-4z" fill="#80848b" fill-rule="evenodd"/></svg>
<svg style="left:1748px;top:112px" width="16" height="16"><use href="#i-kebab"/></svg>
<svg style="left:1834px;top:112px" width="16" height="16"><use href="#i-larr"/></svg>
<svg style="left:1858px;top:112px" width="16" height="16"><use href="#i-rarr"/></svg>
<svg style="left:1887px;top:113px" width="15" height="14" viewBox="0 0 15 14"><path d="M3.2 4.5A5.5 5.5 0 1 1 3 9.5" fill="none" stroke="#e0e0e0" stroke-width="1.8"/><path d="M0 4h5.5L1 8.5z" fill="#e0e0e0"/><path d="M8.5 4v3.5l2 1.5" fill="none" stroke="#e0e0e0" stroke-width="1.6"/></svg>

<div class="a" style="left:1646px;top:137px;width:230px;height:31px;background:#232832;border-radius:2px"></div>
<svg style="left:1650px;top:145px" width="16" height="16"><use href="#i-node"/></svg>
<div class="t" style="left:1674px;top:145px;color:#e0e0e0">Hand</div>
<svg style="left:1856px;top:144px" width="16" height="16"><use href="#i-chevw"/></svg>
<svg style="left:1886px;top:143px" width="16" height="18" viewBox="0 0 16 18"><g fill="none" stroke="#e0e0e0" stroke-width="1.8"><circle cx="9.5" cy="4.5" r="3"/><path d="M7.3 6.8L5 9"/></g><text x="8" y="17.5" font-family="Liberation Sans" font-weight="bold" font-size="8.5" fill="#e0e0e0" text-anchor="middle" letter-spacing="-.3">DOC</text></svg>
<div class="a" style="left:1646px;top:172px;width:230px;height:31px;background:#232832;border-bottom:2px solid #1c2028;border-radius:2px 2px 0 0"></div>
<div class="t" style="left:1652px;top:180px;color:#8f9297">Filter Properties</div>
<svg style="left:1854px;top:179px" width="14" height="14"><use href="#i-search"/></svg>
<svg style="left:1887px;top:179px" width="14" height="14" viewBox="0 0 14 14"><g fill="#e0e0e0"><path d="M2 5h3v6a1.5 1.5 0 0 1-3 0z"/><path d="M3 0h1v5H3zM2 3l1.5-2L5 3z"/><path d="M8 0h1.3v4h1.4V0H12v4l-1 1.5V14H9.3V5.5L8 4z"/></g></svg>

<div class="a" style="left:1652px;top:212px;width:238px;height:24px;background:#3d4350;border-radius:2px"></div>
<svg style="left:1732px;top:216px" width="15" height="15"><use href="#i-gear"/></svg>
<div class="t" style="left:1753px;top:216px;color:#f0f0f0;font-weight:bold">hand.gd</div>
<div class="t" style="left:1660px;top:260px;color:#b4b7bb">Card Scene</div>
<svg style="left:1777px;top:262px" width="16" height="16"><use href="#i-clap"/></svg>
<div class="a" style="left:1799px;top:238px;width:62px;height:62px;background:#4d4d4d;border-radius:3px;overflow:hidden"><div class="a" style="left:0;top:0;width:32px;height:44px;background:#2000cc"></div><div class="t" style="left:0;top:1px;font-size:8px;color:#fff">d_name</div></div>
<svg style="left:1870px;top:263px" width="14" height="14"><use href="#i-chevw"/></svg>
<div class="a" style="left:1652px;top:301px;width:238px;height:25px;background:#3d4350;border-radius:2px"></div>
<svg style="left:1734px;top:304px" width="16" height="16"><use href="#i-node"/></svg>
<div class="t" style="left:1756px;top:305px;color:#f0f0f0;font-weight:bold">Control</div>
<div class="a" style="left:1652px;top:326px;width:238px;height:25px;background:#262b34"></div>
<svg style="left:1654px;top:332px" width="12" height="12"><use href="#i-chev"/></svg>
<div class="t" style="left:1668px;top:330px;color:#f0f0f0;font-weight:bold">Layout</div>
<div class="a" style="left:1664px;top:351px;width:226px;height:61px;background:#283445;border-radius:2px"></div>
<svg style="left:1668px;top:373px" width="16" height="16" viewBox="0 0 16 16"><circle cx="8" cy="8" r="6.2" fill="none" stroke="#8eef97" stroke-width="2"/><path d="M8 4.5v7M4.5 8h7" stroke="#e0e0e0" stroke-width="1.6"/></svg>
<div class="t" style="left:1692px;top:362px;color:#cdcfd2">This node is a child of a</div>
<div class="t" style="left:1692px;top:386px;color:#cdcfd2">regular control.</div>
<svg style="left:1874px;top:375px" width="12" height="12" viewBox="0 0 12 12"><path d="M8 2L4 6l4 4" fill="none" stroke="#8d9096" stroke-width="1.8"/></svg>
<div class="a" style="left:1777px;top:415px;width:113px;height:32px;background:#1f232b;border-radius:3px"></div>
<div class="t" style="left:1672px;top:423px;color:#b4b7bb">Clip Contents</div>
<div class="a" style="left:1784px;top:424px;width:14px;height:14px;background:#3f444e;border-radius:2px"></div>
<div class="t" style="left:1807px;top:423px;color:#e0e0e0">On</div>
<div class="a" style="left:1777px;top:451px;width:113px;height:66px;background:#1f232b;border-radius:3px"></div>
<div class="t" style="left:1672px;top:458px;color:#b4b7bb">Custom Minim</div>
<div class="a" style="left:1777px;top:451px;width:20px;height:30px;background:#181b21;border-radius:3px"></div>
<div class="t" style="left:1783px;top:459px;color:#a8806a">x</div>
<div class="t" style="left:1801px;top:458px;color:#e0e0e0">0.0</div>
<div class="t" style="left:1827px;top:458px;color:#7f8288">px</div>
<div class="a" style="left:1777px;top:486px;width:20px;height:30px;background:#181b21;border-radius:3px"></div>
<div class="t" style="left:1783px;top:494px;color:#5f9e6a">y</div>
<div class="t" style="left:1801px;top:493px;color:#e0e0e0">0.0</div>
<div class="t" style="left:1827px;top:493px;color:#7f8288">px</div>
<div class="a" style="left:1777px;top:521px;width:113px;height:31px;background:#1f232b;border-radius:3px"></div>
<div class="t" style="left:1672px;top:528px;color:#b4b7bb">Layout Directio</div>
<div class="t" style="left:1783px;top:528px;color:#e0e0e0">Inherited</div>
<svg style="left:1873px;top:528px" width="14" height="14"><use href="#i-chevw"/></svg>
<div class="a" style="left:1777px;top:556px;width:113px;height:31px;background:#1f232b;border-radius:3px"></div>
<div class="t" style="left:1672px;top:564px;color:#b4b7bb">Layout Mod</div>
<svg style="left:1753px;top:563px" width="14" height="14" viewBox="0 0 14 14"><path d="M3.5 4.3A4.8 4.8 0 1 1 3 9.5" fill="none" stroke="#e0e0e0" stroke-width="1.8"/><path d="M0.5 2.5v5h5z" fill="#e0e0e0"/></svg>
<div class="t" style="left:1783px;top:564px;color:#e0e0e0">Anchors</div>
<svg style="left:1873px;top:563px" width="14" height="14"><use href="#i-chevw"/></svg>
<div class="a" style="left:1777px;top:591px;width:113px;height:31px;background:#1f232b;border-radius:3px"></div>
<div class="t" style="left:1672px;top:598px;color:#b4b7bb">Anchors Pr</div>
<svg style="left:1753px;top:599px" width="14" height="14" viewBox="0 0 14 14"><path d="M3.5 4.3A4.8 4.8 0 1 1 3 9.5" fill="none" stroke="#e0e0e0" stroke-width="1.8"/><path d="M0.5 2.5v5h5z" fill="#e0e0e0"/></svg>
<div class="a" style="left:1783px;top:598px;width:16px;height:16px;background:#dcdcdc;border-radius:1px"></div><div class="a" style="left:1785px;top:600px;width:12px;height:8px;background:#4a4a4a"></div>
<div class="t" style="left:1803px;top:599px;color:#e0e0e0">Bottom</div>
<svg style="left:1873px;top:598px" width="14" height="14"><use href="#i-chevw"/></svg>
<div class="a" style="left:1664px;top:626px;width:226px;height:25px;background:#262b34"></div>
<svg style="left:1666px;top:631px" width="12" height="12"><use href="#i-chev"/></svg>
<div class="t" style="left:1680px;top:630px;color:#f0f0f0;font-weight:bold">Transform</div>
<div class="a" style="left:1783px;top:651px;width:107px;height:66px;background:#1f232b;border-radius:3px"></div>
<div class="t" style="left:1684px;top:658px;color:#b4b7bb">Size</div>
<svg style="left:1759px;top:659px" width="14" height="14" viewBox="0 0 14 14"><path d="M3.5 4.3A4.8 4.8 0 1 1 3 9.5" fill="none" stroke="#e0e0e0" stroke-width="1.8"/><path d="M0.5 2.5v5h5z" fill="#e0e0e0"/></svg>
<div class="a" style="left:1783px;top:651px;width:20px;height:30px;background:#181b21;border-radius:3px"></div>
<div class="t" style="left:1789px;top:659px;color:#a8806a">x</div>
<div class="t" style="left:1808px;top:658px;color:#e0e0e0">1280.0</div>
<div class="t" style="left:1857px;top:658px;color:#7f8288">px</div>
<div class="a" style="left:1783px;top:686px;width:20px;height:30px;background:#181b21;border-radius:3px"></div>
<div class="t" style="left:1789px;top:694px;color:#5f9e6a">y</div>
<div class="t" style="left:1808px;top:693px;color:#e0e0e0">0.0</div>
<div class="t" style="left:1833px;top:693px;color:#7f8288">px</div>
<div class="a" style="left:1783px;top:721px;width:107px;height:66px;background:#1f232b;border-radius:3px"></div>
<div class="t" style="left:1684px;top:728px;color:#b4b7bb">Position</div>
<svg style="left:1759px;top:729px" width="14" height="14" viewBox="0 0 14 14"><path d="M3.5 4.3A4.8 4.8 0 1 1 3 9.5" fill="none" stroke="#e0e0e0" stroke-width="1.8"/><path d="M0.5 2.5v5h5z" fill="#e0e0e0"/></svg>
<div class="a" style="left:1783px;top:721px;width:20px;height:30px;background:#181b21;border-radius:3px"></div>
<div class="t" style="left:1789px;top:729px;color:#a8806a">x</div>
<div class="t" style="left:1808px;top:728px;color:#e0e0e0">0.0</div>
<div class="t" style="left:1833px;top:728px;color:#7f8288">px</div>
<div class="a" style="left:1783px;top:756px;width:20px;height:30px;background:#181b21;border-radius:3px"></div>
<div class="t" style="left:1789px;top:764px;color:#5f9e6a">y</div>
<div class="t" style="left:1808px;top:763px;color:#e0e0e0">720.0</div>
<div class="t" style="left:1849px;top:763px;color:#7f8288">px</div>
<div class="a" style="left:1783px;top:791px;width:107px;height:30px;background:#1f232b;border-radius:3px"></div>
<div class="t" style="left:1684px;top:798px;color:#b4b7bb">Rotation</div>
<div class="t" style="left:1799px;top:798px;color:#e0e0e0">0.0</div>
<div class="t" style="left:1822px;top:796px;font-size:11px;color:#9b9ea3">°</div>
<div class="a" style="left:1789px;top:816px;width:91px;height:2px;background:#6b6f76"></div><div class="a" style="left:1789px;top:816px;width:46px;height:2px;background:#cdcfd2"></div><div class="a" style="left:1833px;top:814px;width:5px;height:5px;background:#e0e0e0"></div>
<div class="a" style="left:1783px;top:826px;width:107px;height:66px;background:#1f232b;border-radius:3px"></div>
<div class="t" style="left:1684px;top:833px;color:#b4b7bb">Scale</div>
<div class="a" style="left:1783px;top:826px;width:20px;height:30px;background:#181b21;border-radius:3px"></div>
<div class="t" style="left:1789px;top:834px;color:#a8806a">x</div>
<div class="t" style="left:1808px;top:833px;color:#e0e0e0">1.0</div>
<div class="a" style="left:1783px;top:861px;width:20px;height:30px;background:#181b21;border-radius:3px"></div>
<div class="t" style="left:1789px;top:869px;color:#5f9e6a">y</div>
<div class="t" style="left:1808px;top:868px;color:#e0e0e0">1.0</div>
<svg style="left:1870px;top:851px" width="16" height="16"><use href="#i-link"/></svg>
<div class="a" style="left:1783px;top:896px;width:107px;height:66px;background:#1f232b;border-radius:3px"></div>
<div class="t" style="left:1684px;top:903px;color:#b4b7bb">Pivot Offset</div>
<div class="a" style="left:1783px;top:896px;width:20px;height:30px;background:#181b21;border-radius:3px"></div>
<div class="t" style="left:1789px;top:904px;color:#a8806a">x</div>
<div class="t" style="left:1808px;top:903px;color:#e0e0e0">0.0</div>
<div class="t" style="left:1833px;top:903px;color:#7f8288">px</div>
<div class="a" style="left:1783px;top:931px;width:20px;height:30px;background:#181b21;border-radius:3px"></div>
<div class="t" style="left:1789px;top:939px;color:#5f9e6a">y</div>
<div class="t" style="left:1808px;top:938px;color:#e0e0e0">0.0</div>
<div class="t" style="left:1833px;top:938px;color:#7f8288">px</div>
<div class="a" style="left:1652px;top:962px;width:238px;height:66px;background:#262b34"></div>
<svg style="left:1654px;top:968px" width="12" height="12" viewBox="0 0 12 12"><path d="M4 2l4 4-4 4" fill="none" stroke="#8d9096" stroke-width="1.8"/></svg>
<div class="t" style="left:1668px;top:966px;color:#f0f0f0;font-weight:bold">Localization</div>
<svg style="left:1654px;top:993px" width="12" height="12" viewBox="0 0 12 12"><path d="M4 2l4 4-4 4" fill="none" stroke="#8d9096" stroke-width="1.8"/></svg>
<div class="t" style="left:1668px;top:991px;color:#f0f0f0;font-weight:bold">Tooltip</div>
<svg style="left:1654px;top:1018px" width="12" height="12" viewBox="0 0 12 12"><path d="M4 2l4 4-4 4" fill="none" stroke="#8d9096" stroke-width="1.8"/></svg>
<div class="t" style="left:1668px;top:1016px;color:#f0f0f0;font-weight:bold">Focus</div>
<div class="a" style="left:1893px;top:215px;width:5px;height:803px;background:#2f343d;border-radius:3px"></div>
<div class="a" style="left:1893px;top:215px;width:5px;height:528px;background:#7b7f86;border-radius:3px"></div>

<!-- TASKBAR -->
<div class="a" style="left:0;top:1039px;width:1920px;height:1px;background:#101218"></div>
<div class="a" style="left:0;top:1040px;width:1920px;height:40px;background:#eeeeee"></div>


<div class="a" style="left:589px;top:1040px;width:48px;height:40px;background:#f7f7f7"></div>
<svg style="left:16px;top:1052px" width="16" height="16" viewBox="0 0 16 16"><g fill="#111"><path d="M0 2.2l6.5-.9v6.2H0zM7.5 1.2L16 0v7.5H7.5zM0 8.5h6.5v6.2L0 13.8zM7.5 8.5H16V16l-8.5-1.2z"/></g></svg>
<svg style="left:61px;top:1048px" width="23" height="23" viewBox="0 0 23 23"><circle cx="13.5" cy="9.5" r="7.5" fill="none" stroke="#111" stroke-width="2.2"/><path d="M8 15l-7 7" stroke="#111" stroke-width="2.6" stroke-linecap="round"/></svg>
<svg style="left:111px;top:1049px" width="24" height="21" viewBox="0 0 24 21"><defs><linearGradient id="cpa" x1="0" y1="0" x2="0" y2="1"><stop offset="0" stop-color="#12a4f8"/><stop offset=".55" stop-color="#5cbf5c"/><stop offset="1" stop-color="#f5d200"/></linearGradient><linearGradient id="cpb" x1="0" y1="0" x2="0" y2="1"><stop offset="0" stop-color="#b04ef0"/><stop offset=".5" stop-color="#f2588a"/><stop offset="1" stop-color="#ffa45a"/></linearGradient></defs><path d="M12.5 0H15C16.5 0 17.3 1 18 3L19 6H11z" fill="#1a4fd8"/><path d="M6 15H11L10.5 21H9C7.5 21 6.8 20 6.3 18.5z" fill="#f0603a"/><path d="M6.5 0H13.2L9.2 15H2C.7 15 0 14 .3 12.8L3.5 2.8C4.1 1 5 0 6.5 0z" fill="url(#cpa)"/><path d="M13.6 6H22C23.3 6 24 7 23.7 8.2L20.5 18.2C19.9 20 19 21 17.5 21H9.6z" fill="url(#cpb)"/></svg>
<svg style="left:161px;top:1051px" width="22" height="18" viewBox="0 0 22 18"><path d="M0 1a1 1 0 0 1 1-1h6l2 2h12a1 1 0 0 1 1 1v14a1 1 0 0 1-1 1H1a1 1 0 0 1-1-1z" fill="#f8d775"/><path d="M0 1a1 1 0 0 1 1-1h6l2 2H0z" fill="#e0a92a"/><path d="M4 11h14v7h-3v-4H7v4H4z" fill="#2a8ad8"/></svg>
<div class="a" style="left:152px;top:1078px;width:40px;height:2px;background:#e81123"></div>
<svg style="left:209px;top:1048px" width="24" height="24" viewBox="0 0 24 24"><rect x="1" y="2" width="17" height="21" fill="#f4f4f4" stroke="#999" stroke-width=".8"/><rect x="2" y="12" width="15" height="10" fill="#5cc040"/><path d="M5 8v9M7 9h5" stroke="#222" stroke-width="1.2"/><path d="M22 1L14 16l-1.5 2 .5-2.5L21 .5z" fill="#f0b020" stroke="#a06010" stroke-width=".6"/></svg>
<svg style="left:258px;top:1048px" width="27" height="26" viewBox="0 0 27 26"><circle cx="12.5" cy="12.5" r="12" fill="#db4437"/><path d="M12.5 12.5L2.1 6.5A12 12 0 0 0 6.5 22.9z" fill="#0f9d58"/><path d="M12.5 12.5L6.5 22.9A12 12 0 0 0 24.5 12.5z" fill="#f4b400"/><circle cx="12.5" cy="12.5" r="5.5" fill="#fff"/><circle cx="12.5" cy="12.5" r="4.3" fill="#4285f4"/><circle cx="20" cy="19" r="6.5" fill="#ddd" stroke="#fff" stroke-width="1"/><circle cx="20" cy="17" r="3" fill="#3a2a20"/><path d="M14.5 24a6 6 0 0 1 11 0z" fill="#222"/></svg>
<div class="a" style="left:250px;top:1078px;width:40px;height:2px;background:#e81123"></div>
<svg style="left:308px;top:1052px" width="22" height="16" viewBox="0 0 22 16"><rect x="0" y="0" width="22" height="16" rx="1" fill="#7cc7f0" stroke="#3a90c8" stroke-width=".8"/><circle cx="6.5" cy="6" r="3.5" fill="#fff"/><path d="M6.5 6V2.5A3.5 3.5 0 0 1 10 6z" fill="#f0a030"/><path d="M13 3h6M13 6h6M13 9h6" stroke="#fff" stroke-width="1.2"/><path d="M3 13h16" stroke="#f0c040" stroke-width="1.2"/></svg>
<svg style="left:357px;top:1049px" width="22" height="22" viewBox="0 0 22 22"><rect x="0" y="0" width="22" height="22" rx="2" fill="#2b2b2b"/><path d="M22 9v11a2 2 0 0 1-2 2H10z" fill="#ffd400"/></svg>
<svg style="left:406px;top:1050px" width="23" height="21" viewBox="0 0 23 21"><ellipse cx="10" cy="11" rx="9" ry="8" fill="#111"/><ellipse cx="13" cy="4.5" rx="5" ry="3.5" fill="#9ad0f8" stroke="#111" stroke-width="1"/><circle cx="5" cy="11" r="3.5" fill="#fff"/><circle cx="5" cy="11" r="1.8" fill="#111"/><path d="M11 9c1 3 1 6 0 9M14 9c1 3 1 6 0 8" stroke="#f0c020" stroke-width="1.8" fill="none"/><path d="M19 15c2 0 2 2 0 2s0 2 2 2" stroke="#111" stroke-width="1" fill="none"/></svg>
<div class="a" style="left:397px;top:1078px;width:40px;height:2px;background:#e81123"></div>
<svg style="left:454px;top:1050px" width="23" height="19" viewBox="0 0 23 19"><rect x="0" y="0" width="23" height="19" fill="#0c0c0c" stroke="#888" stroke-width=".6"/><rect x="0" y="0" width="23" height="2" fill="#bbb"/><path d="M3 5h2M3 7h2M7 5l1 3M10 10h8" stroke="#ddd" stroke-width="1"/></svg>
<svg style="left:505px;top:1049px" width="20" height="22" viewBox="0 0 20 22"><defs><linearGradient id="sp" x1="0" x2="1"><stop offset="0" stop-color="#d8dcdf"/><stop offset="1" stop-color="#6d7378"/></linearGradient></defs><path d="M1 7h4l8-6v20l-8-6H1z" fill="url(#sp)"/><ellipse cx="14" cy="11" rx="5" ry="9" fill="#8a9095"/><ellipse cx="13" cy="11" rx="3" ry="6" fill="#b8bec2"/></svg>
<div class="a" style="left:495px;top:1078px;width:40px;height:2px;background:#e81123"></div>
<svg style="left:552px;top:1050px" width="24" height="22" viewBox="0 0 24 22"><rect x="4" y="1" width="19" height="15" fill="#dfe3e6" stroke="#9aa0a5" stroke-width=".8"/><rect x="6" y="3" width="15" height="11" fill="#bfe0f5"/><path d="M6 10l3 0 2-5 2 7 2-4 2 2h4" stroke="#2a70c0" stroke-width="1" fill="none"/><path d="M10 17h8l2 4H8z" fill="#c8ccd0"/><rect x="0" y="5" width="5" height="15" fill="#c0c4c8" stroke="#888" stroke-width=".6"/><rect x="1" y="7" width="2" height="1" fill="#4a4"/></svg>
<div class="a" style="left:544px;top:1078px;width:40px;height:2px;background:#e81123"></div>
<svg style="left:602px;top:1049px" width="22" height="22" viewBox="0 0 16 16"><path d="M2.5 6L1 4.5 3 3l1.5 1L6 2.2 6.5.5h3L10 2.2 11.5 4 13 3l2 1.5L13.5 6v6c-2 2.5-9 2.5-11 0z" fill="#478cbf"/><circle cx="5.5" cy="8" r="1.4" fill="#fff"/><circle cx="10.5" cy="8" r="1.4" fill="#fff"/><circle cx="5.6" cy="8.1" r=".7" fill="#414042"/><circle cx="10.4" cy="8.1" r=".7" fill="#414042"/><path d="M1.5 10.5h3v1.5h2v-1h3v1h2v-1.5h3" fill="none" stroke="#fff" stroke-width=".8"/></svg>
<div class="a" style="left:589px;top:1078px;width:48px;height:2px;background:#e81123"></div>

<!-- TRAY -->
<svg style="left:1575px;top:1056px" width="13" height="8" viewBox="0 0 13 8"><path d="M1 7.5l5.5-6 5.5 6" fill="none" stroke="#111" stroke-width="1.3"/></svg>
<svg style="left:1597px;top:1055px" width="17" height="9" viewBox="0 0 17 9"><path d="M1 8.5a3 3 0 0 1 2-3 4 4 0 0 1 4-3 5 5 0 0 1 8 2 2.5 2.5 0 0 1 1.8 4z" fill="#f38020"/></svg>
<svg style="left:1620px;top:1054px" width="17" height="13" viewBox="0 0 17 13"><path d="M1 4h3l4-3v11L4 9H1z" fill="none" stroke="#111" stroke-width="1"/><path d="M10 4a3 3 0 0 1 0 5M12 2.5a5.5 5.5 0 0 1 0 8M14 1a7.5 7.5 0 0 1 0 11" fill="none" stroke="#777" stroke-width="1"/></svg>
<svg style="left:1648px;top:1053px" width="12" height="15" viewBox="0 0 12 15"><path d="M2 1h6M2 14h6" stroke="#111" stroke-width="1"/><rect x="1" y="4" width="7" height="7" rx="1.5" fill="none" stroke="#111" stroke-width="1.1"/><path d="M9 6l2.5-1.5v6L9 9z" fill="none" stroke="#111" stroke-width="1"/></svg>
<svg style="left:1669px;top:1052px" width="17" height="17" viewBox="0 0 17 17"><path d="M1 2l15-2v13L1 14z" fill="none" stroke="#111" stroke-width="1.1"/><path d="M5 6a3 3 0 0 1 5 0M10 8a3 3 0 0 1-5 0" fill="none" stroke="#111" stroke-width="1"/><circle cx="13" cy="13" r="3.3" fill="#3a78c8"/></svg>
<svg style="left:1693px;top:1054px" width="17" height="12" viewBox="0 0 17 12"><rect x="5" y="3" width="10" height="7" fill="none" stroke="#111" stroke-width="1.1"/><rect x="7" y="5" width="6" height="3" fill="#111"/><rect x="15.5" y="5" width="1.5" height="3" fill="#111"/><path d="M1 1v3M4 1v3M0.5 4h4v2a2 2 0 0 1-4 0zM2.5 8v3" stroke="#111" stroke-width="1" fill="none"/></svg>
<svg style="left:1717px;top:1054px" width="17" height="13" viewBox="0 0 17 13"><path d="M1 4h3l4-3v11L4 9H1z" fill="none" stroke="#111" stroke-width="1"/><path d="M10 4a3 3 0 0 1 0 5M12 2.5a5.5 5.5 0 0 1 0 8M14 1a7.5 7.5 0 0 1 0 11" fill="none" stroke="#777" stroke-width="1"/></svg>
<svg style="left:1744px;top:1053px" width="13" height="13" viewBox="0 0 13 13"><path d="M1 12A11 11 0 0 1 12 1M4 12a8 8 0 0 1 8-8M7 12a5 5 0 0 1 5-5" fill="none" stroke="#111" stroke-width="1.2"/><circle cx="11" cy="11" r="1.3" fill="#111"/></svg>
<div class="t" style="left:1767px;top:1054px;font-size:12px;color:#111;letter-spacing:0">ENG</div>
<div class="t" style="left:1821px;top:1045px;font-size:12px;color:#111;letter-spacing:0">2:58</div>
<div class="t" style="left:1803px;top:1063px;font-size:12px;color:#111;letter-spacing:0">25/12/2025</div>
<svg style="left:1879px;top:1052px" width="17" height="16" viewBox="0 0 17 16"><path d="M.5.5h16v11H11l-2.5 3.5L6 11.5H.5z" fill="none" stroke="#111" stroke-width="1.1"/></svg>
<div class="a" style="left:1915px;top:1040px;width:1px;height:40px;background:#c8c8c8"></div>

</body></html>
